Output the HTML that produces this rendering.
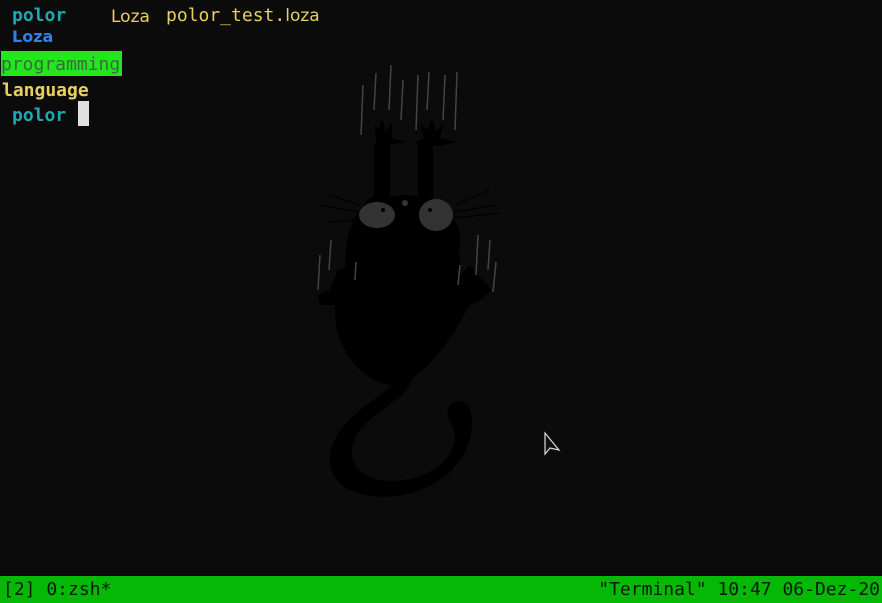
<!DOCTYPE html>
<html><head><meta charset="utf-8"><style>
html,body{margin:0;padding:0;width:882px;height:602px;overflow:hidden;background:#0b0b0b;}
.t{position:absolute;font-family:"DejaVu Sans Mono","Liberation Mono",monospace;font-size:18px;line-height:20px;white-space:pre;}
.p{font-family:"DejaVu Sans","Liberation Sans",sans-serif;}
</style></head><body>
<svg style="position:absolute;left:0;top:0" width="882" height="602">
<g fill="#000">
<path d="M378 150 L374 125 L378 130 L382 118 L386 132 L392 122 L392 138 L405 142 L388 145 L386 200 L420 200 L420 145 L415 142 L424 138 L420 125 L428 130 L432 118 L436 132 L444 122 L440 138 L456 142 L440 146 L432 146 L430 205 C455 215 462 250 460 275 L470 265 L478 275 L492 290 L480 300 L470 305 C455 330 440 360 410 380 C395 390 375 385 355 365 C335 340 335 320 335 305 L320 305 L318 295 L330 290 L338 270 L345 268 C345 250 348 225 360 210 C365 200 372 195 380 195 Z"/>
<rect x="374" y="140" width="16" height="70" rx="6"/>
<rect x="418" y="140" width="15" height="70" rx="6"/>
<ellipse cx="405" cy="240" rx="55" ry="45"/>
<path d="M400 378 C380 400 330 420 330 460 C330 495 380 505 420 490 C460 475 478 440 470 410 C465 398 450 398 448 410 C446 420 455 425 455 440 C450 470 410 485 380 480 C350 475 345 450 360 430 C375 410 405 400 412 380 Z"/>
</g>
<ellipse cx="377" cy="215" rx="18" ry="13" fill="#333"/>
<ellipse cx="436" cy="215" rx="17" ry="16" fill="#333"/>
<circle cx="383" cy="210" r="2" fill="#000"/><circle cx="430" cy="210" r="2" fill="#000"/>
<circle cx="405" cy="203" r="3" fill="#333"/>
<g stroke="#444" stroke-width="1.5">
<line x1="361" y1="135" x2="363" y2="85"/><line x1="374" y1="110" x2="376" y2="73"/><line x1="389" y1="110" x2="391" y2="65"/><line x1="401" y1="120" x2="403" y2="80"/><line x1="416" y1="130" x2="418" y2="75"/><line x1="427" y1="110" x2="429" y2="72"/><line x1="443" y1="120" x2="445" y2="75"/><line x1="455" y1="130" x2="457" y2="72"/>
<line x1="318" y1="290" x2="320" y2="255"/><line x1="329" y1="270" x2="331" y2="240"/><line x1="355" y1="280" x2="356" y2="262"/>
<line x1="458" y1="285" x2="460" y2="265"/><line x1="476" y1="275" x2="478" y2="235"/><line x1="488" y1="270" x2="490" y2="240"/><line x1="493" y1="292" x2="496" y2="262"/>
</g>
<g stroke="#000" stroke-width="1.2">
<line x1="360" y1="205" x2="330" y2="195"/><line x1="358" y1="212" x2="320" y2="205"/><line x1="358" y1="220" x2="325" y2="222"/>
<line x1="455" y1="205" x2="490" y2="190"/><line x1="455" y1="212" x2="495" y2="205"/><line x1="455" y1="218" x2="500" y2="213"/>
</g>
<path d="M545 433 L545 454 L550 448 L559 450 Z" fill="#111" stroke="#ddd" stroke-width="1.2"/>
</svg>
<div class="t" style="left:12px;top:6px;color:#1fa8b2;font-weight:bold">polor</div>
<div class="t p" style="left:111px;top:7px;color:#e8d060;font-size:17px">Loza</div>
<div class="t" style="left:166px;top:6px;color:#e8d060">polor_test.<span class="p" style="font-size:17px">loza</span></div>
<div class="t p" style="left:12px;top:27px;color:#2b84e8;font-weight:bold;font-size:16px">Loza</div>
<div style="position:absolute;left:1px;top:51px;width:121px;height:25px;background:#22e61e"></div>
<div class="t" style="left:1px;top:55px;color:#3b6b3b">programming</div>
<div class="t" style="left:2px;top:81px;color:#e8d060;font-weight:bold">language</div>
<div class="t" style="left:12px;top:106px;color:#1fa8b2;font-weight:bold">polor</div>
<div style="position:absolute;left:78px;top:101px;width:11px;height:25px;background:#e0e0e0"></div>
<div style="position:absolute;left:0;top:575px;width:882px;height:27px;background:#05b805;border-top:1px solid #000"></div>
<div class="t" style="left:3px;top:580px;color:#0a1a0a">[2] 0:zsh*</div>
<div class="t" style="right:2px;top:580px;color:#0a1a0a">"Terminal" 10:47 06-Dez-20</div>
</body></html>
